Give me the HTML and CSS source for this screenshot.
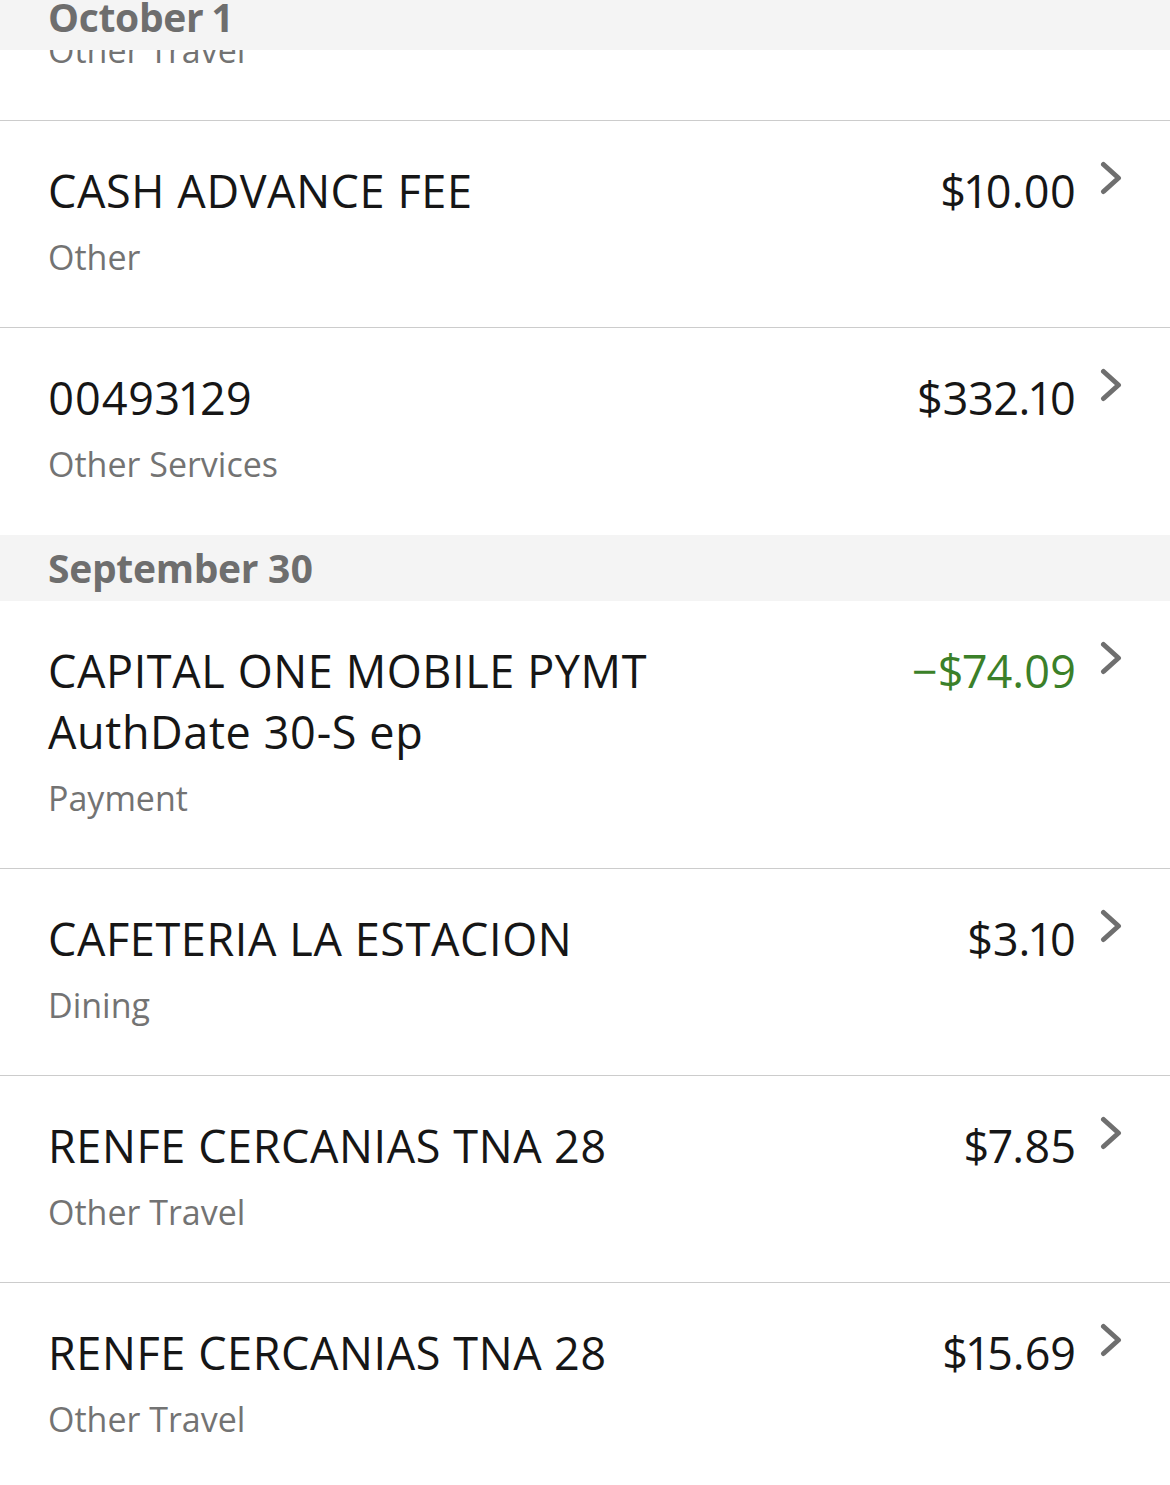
FILE: index.html
```html
<!DOCTYPE html>
<html lang="en">
<head>
<meta charset="utf-8">
<title>Transactions</title>
<link rel="stylesheet" href="styles.css">
</head>
<body>
<main class="list">
  <section class="day day--scrolled">
    <h2 class="date-header date-header--stuck">October 1</h2>
    <div class="txn">
      <div class="txn-main">
        <div class="txn-title">RENFE CERCANIAS TNA 28</div>
        <div class="txn-cat">Other Travel</div>
      </div>
      <div class="txn-amount">$7.85</div>
      <svg class="chev" viewBox="0 0 22 34" width="22" height="34"><path d="M3.5 3.5 L18.5 17 L3.5 30.5"/></svg>
    </div>
    <div class="txn">
      <div class="txn-main">
        <div class="txn-title">CASH ADVANCE FEE</div>
        <div class="txn-cat">Other</div>
      </div>
      <div class="txn-amount">$10.00</div>
      <svg class="chev" viewBox="0 0 22 34" width="22" height="34"><path d="M3.5 3.5 L18.5 17 L3.5 30.5"/></svg>
    </div>
    <div class="txn">
      <div class="txn-main">
        <div class="txn-title">00493129</div>
        <div class="txn-cat">Other Services</div>
      </div>
      <div class="txn-amount">$332.10</div>
      <svg class="chev" viewBox="0 0 22 34" width="22" height="34"><path d="M3.5 3.5 L18.5 17 L3.5 30.5"/></svg>
    </div>
  </section>
  <section class="day">
    <h2 class="date-header">September 30</h2>
    <div class="txn">
      <div class="txn-main">
        <div class="txn-title">CAPITAL ONE MOBILE PYMT AuthDate 30-S ep</div>
        <div class="txn-cat">Payment</div>
      </div>
      <div class="txn-amount txn-amount--credit">&minus;$74.09</div>
      <svg class="chev" viewBox="0 0 22 34" width="22" height="34"><path d="M3.5 3.5 L18.5 17 L3.5 30.5"/></svg>
    </div>
    <div class="txn">
      <div class="txn-main">
        <div class="txn-title">CAFETERIA LA ESTACION</div>
        <div class="txn-cat">Dining</div>
      </div>
      <div class="txn-amount">$3.10</div>
      <svg class="chev" viewBox="0 0 22 34" width="22" height="34"><path d="M3.5 3.5 L18.5 17 L3.5 30.5"/></svg>
    </div>
    <div class="txn">
      <div class="txn-main">
        <div class="txn-title">RENFE CERCANIAS TNA 28</div>
        <div class="txn-cat">Other Travel</div>
      </div>
      <div class="txn-amount">$7.85</div>
      <svg class="chev" viewBox="0 0 22 34" width="22" height="34"><path d="M3.5 3.5 L18.5 17 L3.5 30.5"/></svg>
    </div>
    <div class="txn">
      <div class="txn-main">
        <div class="txn-title">RENFE CERCANIAS TNA 28</div>
        <div class="txn-cat">Other Travel</div>
      </div>
      <div class="txn-amount">$15.69</div>
      <svg class="chev" viewBox="0 0 22 34" width="22" height="34"><path d="M3.5 3.5 L18.5 17 L3.5 30.5"/></svg>
    </div>
  </section>
</main>
</body>
</html>
```

FILE: styles.css
```css
html, body {
  margin: 0;
  padding: 0;
  background: #ffffff;
}

body {
  font-family: "Open Sans", "Noto Sans", sans-serif;
  font-variant-numeric: proportional-nums;
  overflow: hidden;
  height: 1485px;
}

.list {
  display: flex;
  flex-direction: column;
}

.day {
  display: flex;
  flex-direction: column;
}

.day--scrolled {
  margin-top: -86px;
}

.date-header {
  margin: 0;
  height: 66px;
  line-height: 66px;
  padding: 0 0 0 48px;
  background: #f4f4f4;
  color: #6e6e6e;
  font-size: 39px;
  font-weight: 700;
  letter-spacing: -0.3px;
}

.date-header--stuck {
  position: fixed;
  top: -16px;
  left: 0;
  right: 0;
  z-index: 2;
}

.txn {
  display: flex;
  align-items: flex-start;
  padding: 39px 48px 47px 48px;
  border-bottom: 1px solid #cccccc;
}

.day .txn:last-child {
  border-bottom-color: transparent;
}

.txn-main {
  flex: 1;
  min-width: 0;
  padding-right: 24px;
}

.txn-title {
  font-size: 45px;
  line-height: 61px;
  letter-spacing: 0.6px;
  color: #161616;
}

.txn-cat {
  margin-top: 13px;
  font-size: 34px;
  line-height: 46px;
  color: #737373;
}

.txn-amount {
  min-width: 220px;
  text-align: right;
  font-size: 45px;
  line-height: 61px;
  color: #161616;
}

.txn-amount--credit {
  color: #3b8029;
}

.chev {
  flex: none;
  margin-left: 24px;
  margin-top: 1px;
}

.chev path {
  fill: none;
  stroke: #6f6f6f;
  stroke-width: 5;
  stroke-linecap: round;
  stroke-linejoin: round;
}
```
